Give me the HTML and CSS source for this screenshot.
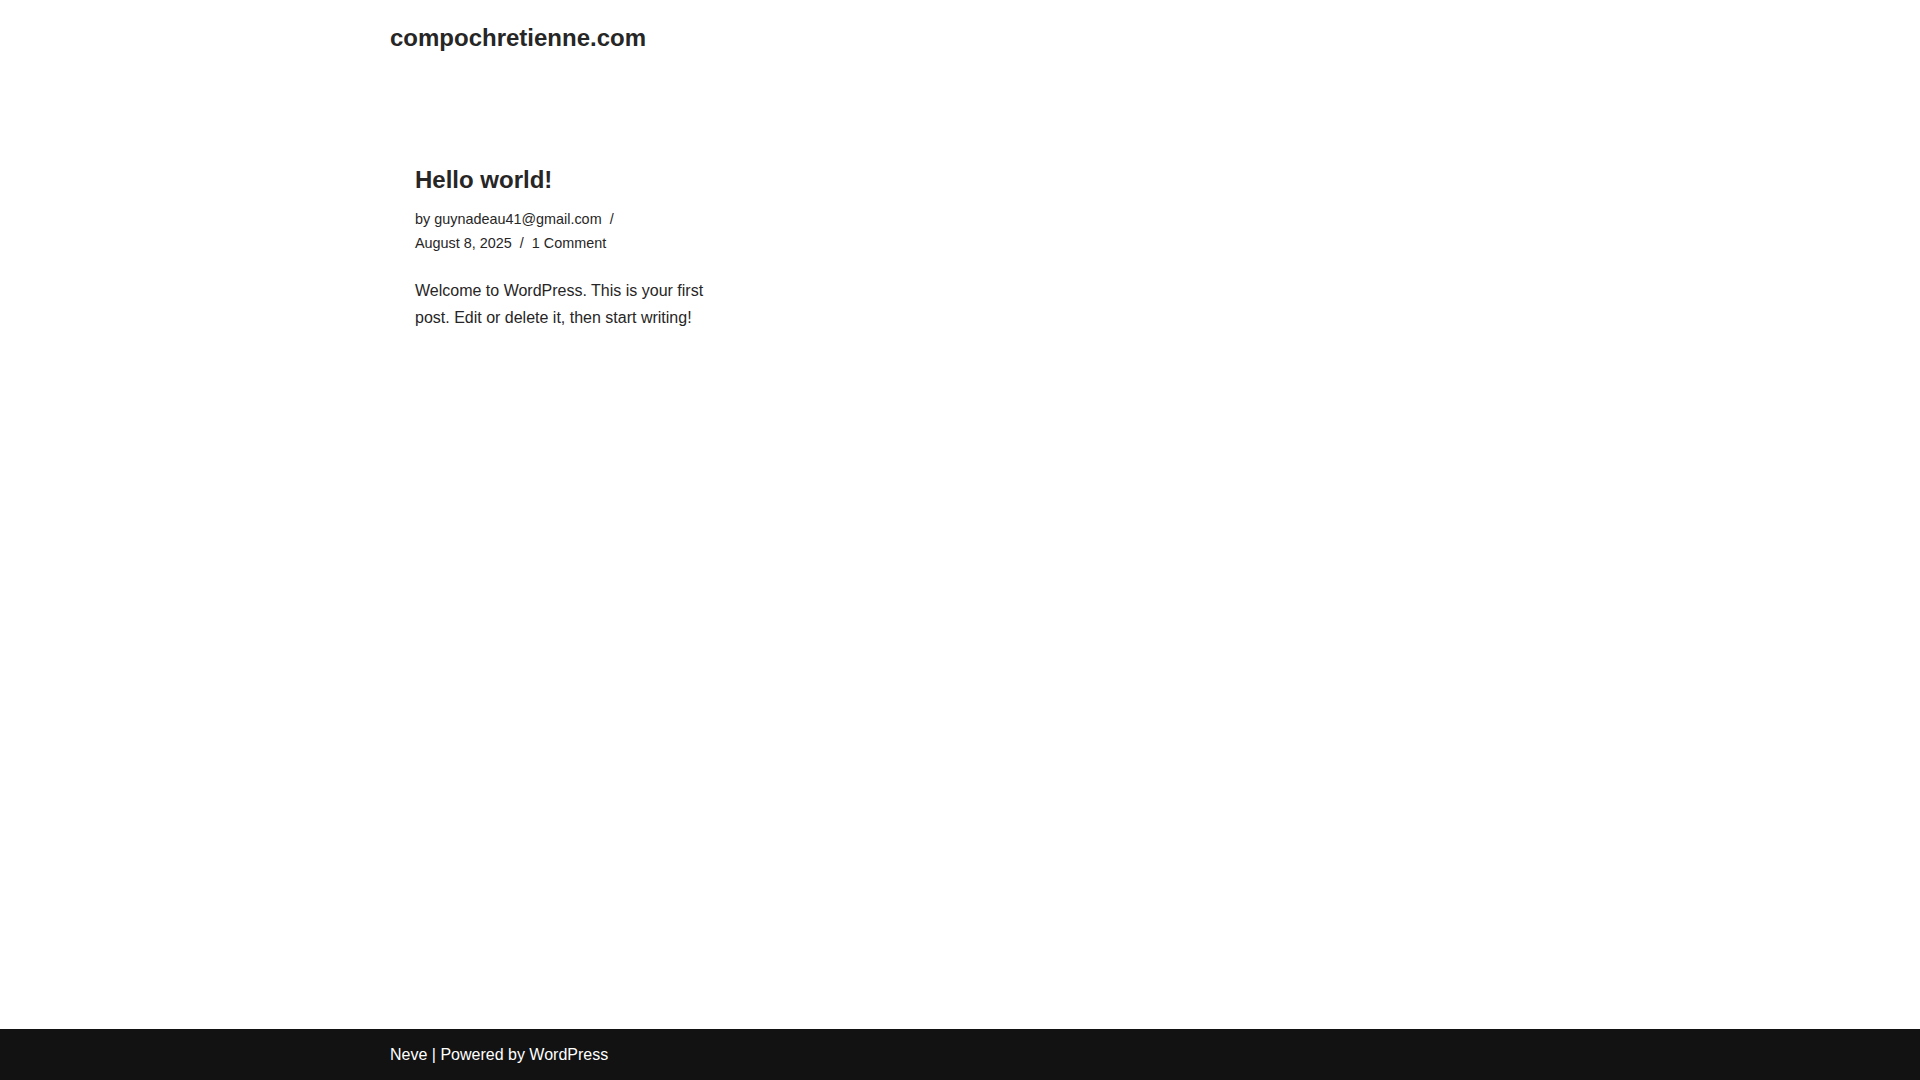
FILE: index.html
```html
<!DOCTYPE html>
<html lang="en">
<head>
<meta charset="utf-8">
<title>compochretienne.com</title>
<link rel="stylesheet" href="styles.css">
</head>
<body>
<div class="page">
  <header class="site-header">
    <div class="container">
      <a class="site-title" href="#">compochretienne.com</a>
    </div>
  </header>
  <main class="site-main">
    <div class="container">
      <div class="posts">
        <article class="post">
          <h2 class="post-title"><a href="#">Hello world!</a></h2>
          <ul class="meta">
            <li class="meta-item">by <a href="#">guynadeau41@gmail.com</a></li>
            <li class="meta-item">August 8, 2025</li>
            <li class="meta-item last"><a href="#">1 Comment</a></li>
          </ul>
          <p class="excerpt">Welcome to WordPress. This is your first post. Edit or delete it, then start writing!</p>
        </article>
      </div>
    </div>
  </main>
  <footer class="site-footer">
    <div class="container">
      <p class="footer-text"><a href="#">Neve</a> | Powered by <a href="#">WordPress</a></p>
    </div>
  </footer>
</div>
</body>
</html>
```
FILE: styles.css
```css
* { box-sizing: border-box; }
html, body { margin: 0; padding: 0; }
body {
  font-family: Arial, "Liberation Sans", Helvetica, sans-serif;
  font-size: 16px;
  line-height: 1.7;
  color: #272626;
  background: #ffffff;
}
a { color: inherit; text-decoration: none; }
.page {
  min-height: 100vh;
  display: flex;
  flex-direction: column;
}
.container {
  max-width: 1170px;
  margin: 0 auto;
  padding: 0 15px;
  width: 100%;
}
.site-header {
  padding: 19px 0 21px;
}
.site-title {
  display: block;
  font-size: 24px;
  font-weight: 700;
  line-height: 38.4px;
}
.site-main {
  flex: 1;
  padding-top: 86px;
}
.posts {
  display: flex;
}
.post {
  width: 296px;
  margin-left: 25px;
}
.post-title {
  margin: 0 0 12.5px;
  font-size: 24px;
  line-height: 31.2px;
  font-weight: 700;
}
.meta {
  list-style: none;
  margin: 0 0 22px;
  padding: 0;
  display: flex;
  flex-wrap: wrap;
  font-size: 14.4px;
  line-height: 23.5px;
}
.meta-item::after {
  content: "/";
  padding: 0 8px;
}
.meta-item.last::after { content: none; }
.excerpt {
  margin: 0;
  font-size: 16px;
  line-height: 27.2px;
}
.site-footer {
  background: #121212;
  color: #ffffff;
  padding: 12px 0;
}
.footer-text {
  margin: 0;
  font-size: 16px;
  line-height: 27.2px;
}
```
